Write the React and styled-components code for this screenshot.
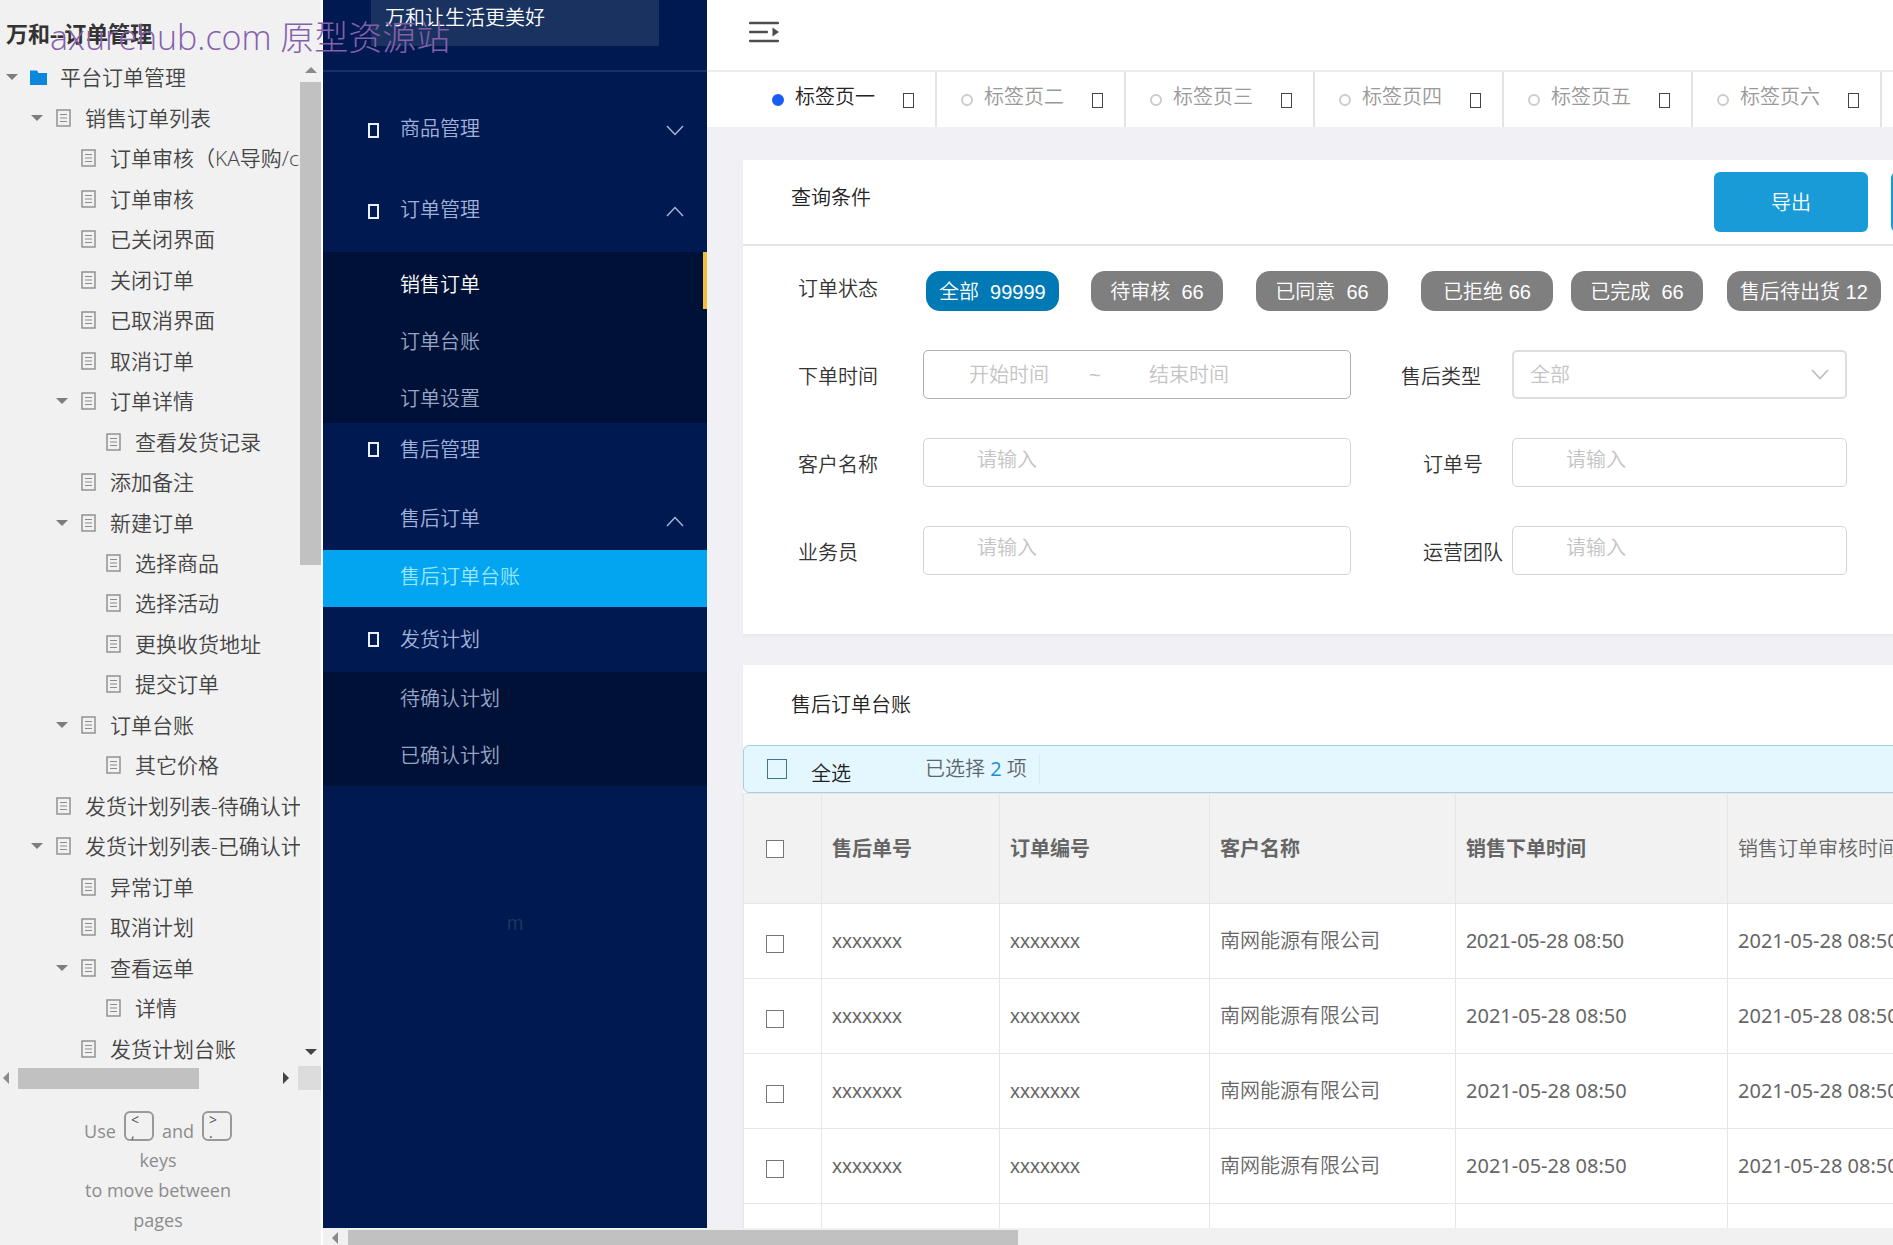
import React, { useState } from "react";
import styled, { createGlobalStyle } from "styled-components";

const pages = [
  { level: 0, text: "平台订单管理", open: true, folder: true },
  { level: 1, text: "销售订单列表", open: true },
  { level: 2, text: "订单审核（KA导购/cc）" },
  { level: 2, text: "订单审核" },
  { level: 2, text: "已关闭界面" },
  { level: 2, text: "关闭订单" },
  { level: 2, text: "已取消界面" },
  { level: 2, text: "取消订单" },
  { level: 2, text: "订单详情", open: true },
  { level: 3, text: "查看发货记录" },
  { level: 2, text: "添加备注" },
  { level: 2, text: "新建订单", open: true },
  { level: 3, text: "选择商品" },
  { level: 3, text: "选择活动" },
  { level: 3, text: "更换收货地址" },
  { level: 3, text: "提交订单" },
  { level: 2, text: "订单台账", open: true },
  { level: 3, text: "其它价格" },
  { level: 1, text: "发货计划列表-待确认计划" },
  { level: 1, text: "发货计划列表-已确认计划", open: true },
  { level: 2, text: "异常订单" },
  { level: 2, text: "取消计划" },
  { level: 2, text: "查看运单", open: true },
  { level: 3, text: "详情" },
  { level: 2, text: "发货计划台账" },
];

const tabs = ["标签页一", "标签页二", "标签页三", "标签页四", "标签页五", "标签页六", "标签页七"];

const statuses = [
  "全部  99999",
  "待审核  66",
  "已同意  66",
  "已拒绝 66",
  "已完成  66",
  "售后待出货 12",
];

const time = "2021-05-28 08:50";
const rows = [1, 2, 3, 4, 5];

function Chevron({ up, color, width }) {
  return (
    <svg width="18" height="11" viewBox="0 0 18 11" fill="none" stroke={color} strokeWidth={width}>
      <path d={up ? "M1 10 L9 1.5 L17 10" : "M1 1 L9 9.5 L17 1"} />
    </svg>
  );
}

function Arrow({ dir, color }) {
  const d = {
    up: "M0 9 L6 3 L12 9 Z",
    down: "M0 3 L12 3 L6 9 Z",
    left: "M9 0 L3 6 L9 12 Z",
    right: "M3 0 L9 6 L3 12 Z",
  };
  return (
    <svg width="12" height="12" viewBox="0 0 12 12" fill={color}>
      <path d={d[dir]} />
    </svg>
  );
}

function TreeIcon({ folder }) {
  if (folder) {
    return (
      <svg width="17" height="15" viewBox="0 0 17 15" fill="#0d87dc">
        <path d="M0 0.5 H7 L8.5 3 H17 V15 H0 Z" />
      </svg>
    );
  }
  return (
    <svg width="15" height="18" viewBox="0 0 15 18" fill="none" stroke="#8c8c8c" strokeWidth="1.4">
      <rect x="1" y="1" width="13" height="16" />
      <path d="M4 5.5 H11 M4 9 H11 M4 12.5 H11" strokeWidth="1.2" />
    </svg>
  );
}

function PageTree() {
  return (
    <TreePanel>
      <TreeTitle>万和--订单管理</TreeTitle>
      <TreeBody>
        <TreeList>
          {pages.map((page) => (
            <TreeRow key={page.text} href="#" $level={page.level}>
              <ToggleSlot>{page.open && <Arrow dir="down" color="#7d7d7d" />}</ToggleSlot>
              <IconSlot>
                <TreeIcon folder={page.folder} />
              </IconSlot>
              {page.text}
            </TreeRow>
          ))}
        </TreeList>
        <VScroll>
          <Arrow dir="up" color="#8a8a8a" />
          <VThumb />
          <Arrow dir="down" color="#444" />
        </VScroll>
      </TreeBody>
      <TreeHScroll>
        <HTrack>
          <Arrow dir="left" color="#8a8a8a" />
          <TreeHThumb />
          <Arrow dir="right" color="#444" />
        </HTrack>
        <Corner />
      </TreeHScroll>
      <KeyHint>
        <KeyLine>
          <span>Use</span>
          <Key>
            <span>&lt;</span>
            <span>,</span>
          </Key>
          <span>and</span>
          <Key>
            <span>&gt;</span>
            <span>.</span>
          </Key>
        </KeyLine>
        <p>keys</p>
        <p>to move between</p>
        <p>pages</p>
      </KeyHint>
    </TreePanel>
  );
}

function Sidebar() {
  return (
    <Side>
      <SideHead>
        <Slogan>万和让生活更美好</Slogan>
      </SideHead>
      <Menu>
        <MenuItem href="#" $height={81}>
          <Box $light />
          <MenuText $raised>商品管理</MenuText>
          <Chevron color="#a9b8dc" width="1.4" />
        </MenuItem>
        <MenuItem href="#" $height={81}>
          <Box $light />
          <MenuText $raised>订单管理</MenuText>
          <Chevron up color="#a9b8dc" width="1.4" />
        </MenuItem>
        <SubMenu $low>
          <SubItem href="#" $current>
            销售订单
          </SubItem>
          <SubItem href="#">订单台账</SubItem>
          <SubItem href="#">订单设置</SubItem>
        </SubMenu>
        <MenuItem href="#" $height={53}>
          <Box $light />
          <MenuText>售后管理</MenuText>
        </MenuItem>
        <MenuItem href="#" $height={74} $low>
          <Box $hidden />
          <MenuText $raised>售后订单</MenuText>
          <Chevron up color="#a9b8dc" width="1.4" />
        </MenuItem>
        <SubMenu>
          <SubItem href="#" $selected>
            售后订单台账
          </SubItem>
        </SubMenu>
        <MenuItem href="#" $height={65}>
          <Box $light />
          <MenuText>发货计划</MenuText>
        </MenuItem>
        <SubMenu>
          <SubItem href="#">待确认计划</SubItem>
          <SubItem href="#">已确认计划</SubItem>
        </SubMenu>
      </Menu>
      <SideNote>m</SideNote>
    </Side>
  );
}

function TabBar() {
  const [active, setActive] = useState(0);
  return (
    <Tabs>
      {tabs.map((tab, i) => (
        <Tab key={tab}>
          <TabButton type="button" $active={i === active} onClick={() => setActive(i)}>
            <Dot $active={i === active} />
            {tab}
          </TabButton>
          <CloseButton type="button" aria-label={"关闭" + tab}>
            <Box />
          </CloseButton>
        </Tab>
      ))}
    </Tabs>
  );
}

function Filters() {
  const [status, setStatus] = useState(0);
  return (
    <Card>
      <FilterHead>
        <CardTitle>查询条件</CardTitle>
        <Actions>
          <PrimaryButton type="button">导出</PrimaryButton>
          <PrimaryButton type="button">查询</PrimaryButton>
        </Actions>
      </FilterHead>
      <FilterForm>
        <StatusLabel>订单状态</StatusLabel>
        <Pills>
          {statuses.map((s, i) => (
            <Pill key={s} type="button" $active={i === status} onClick={() => setStatus(i)}>
              {s}
            </Pill>
          ))}
        </Pills>

        <Label htmlFor="start">下单时间</Label>
        <DateRange>
          <DateInput id="start" placeholder="开始时间" />
          <span>~</span>
          <DateInput aria-label="结束时间" placeholder="结束时间" />
        </DateRange>
        <Label htmlFor="type" $indent={50}>
          售后类型
        </Label>
        <SelectBox>
          <Select id="type">
            <option>全部</option>
          </Select>
          <Chevron color="#bfbfbf" width="1.8" />
        </SelectBox>

        <Label htmlFor="customer">客户名称</Label>
        <TextInput id="customer" placeholder="请输入" />
        <Label htmlFor="order" $indent={72}>
          订单号
        </Label>
        <TextInput id="order" placeholder="请输入" />

        <Label htmlFor="sales">业务员</Label>
        <TextInput id="sales" placeholder="请输入" />
        <Label htmlFor="team" $indent={72}>
          运营团队
        </Label>
        <TextInput id="team" placeholder="请输入" />
      </FilterForm>
    </Card>
  );
}

function Ledger() {
  return (
    <Card>
      <LedgerHead>
        <CardTitle>售后订单台账</CardTitle>
      </LedgerHead>
      <SelectBar>
        <SelectAll>
          <Check type="checkbox" $blue />
          <span>全选</span>
        </SelectAll>
        <Selected>
          已选择 <em>2</em> 项
        </Selected>
      </SelectBar>
      <Table>
        <colgroup>
          <Col $width={78} />
          <Col $width={178} />
          <Col $width={210} />
          <Col $width={246} />
          <Col $width={272} />
          <Col />
        </colgroup>
        <thead>
          <tr>
            <CheckHead>
              <Check type="checkbox" aria-label="全选" />
            </CheckHead>
            <Th>售后单号</Th>
            <Th>订单编号</Th>
            <Th>客户名称</Th>
            <Th>销售下单时间</Th>
            <Th $plain>销售订单审核时间</Th>
          </tr>
        </thead>
        <tbody>
          {rows.map((row) => (
            <tr key={row}>
              <CheckCell>
                <Check type="checkbox" aria-label={"选择第" + row + "行"} />
              </CheckCell>
              <Td>xxxxxxx</Td>
              <Td>xxxxxxx</Td>
              <Td>南网能源有限公司</Td>
              <Td $wide={row > 1}>{time}</Td>
              <Td $wide>{time}</Td>
            </tr>
          ))}
        </tbody>
      </Table>
    </Card>
  );
}

export default function App() {
  return (
    <Page>
      <GlobalStyle />
      <PageTree />
      <Frame>
        <Canvas>
          <Sidebar />
          <Main>
            <TopBar>
              <IconButton type="button" aria-label="收起菜单">
                <svg width="32" height="22" viewBox="0 0 32 22" fill="#4d4d4d">
                  <rect x="1" y="0.7" width="30" height="2.6" rx="1" />
                  <rect x="1" y="9.7" width="19" height="2.6" rx="1" />
                  <rect x="1" y="18.7" width="30" height="2.6" rx="1" />
                  <path d="M24.5 6.5 L31 11 L24.5 15.5 Z" />
                </svg>
              </IconButton>
            </TopBar>
            <TabBar />
            <Content>
              <Filters />
              <Ledger />
            </Content>
          </Main>
        </Canvas>
        <FrameHScroll>
          <Arrow dir="left" color="#8a8a8a" />
          <FrameHThumb />
        </FrameHScroll>
      </Frame>
      <Watermark>axurehub.com 原型资源站</Watermark>
    </Page>
  );
}

const GlobalStyle = createGlobalStyle`
  * {
    box-sizing: border-box;
  }

  body {
    margin: 0;
    font-family: "Liberation Sans", "Noto Sans CJK SC", sans-serif;
    font-size: 20px;
    font-weight: 350;
    line-height: 30px;
    color: #333;
  }

  p, h1, h2 {
    margin: 0;
  }

  a {
    text-decoration: none;
  }

  button, input, select {
    font: inherit;
    color: inherit;
    padding: 0;
    border: none;
    background: none;
    border-radius: 0;
  }
`;

const Page = styled.div`
  position: relative;
  display: flex;
  height: 100vh;
  overflow: hidden;
  background-color: #fff;
`;

/* over everything, like a stamp */
const Watermark = styled.div`
  position: absolute;
  top: 17px;
  left: 50px;
  font-family: "Open Sans", "Noto Sans CJK SC", sans-serif;
  font-size: 34px;
  font-weight: 300;
  line-height: 40px;
  white-space: nowrap;
  color: #8560ac;
  pointer-events: none;
`;

const TreePanel = styled.aside`
  flex: none;
  width: 321px;
  display: flex;
  flex-direction: column;
  background-color: #f1f1f1;
  color: #444;
  font-family: "Open Sans", "Noto Sans CJK SC", sans-serif;
`;

const TreeTitle = styled.h1`
  height: 57px;
  padding: 18px 6px 0;
  font-size: 22px;
  font-weight: 700;
  line-height: 30px;
  color: #333;
`;

const TreeBody = styled.div`
  display: flex;
  height: 1009px;
`;

const TreeList = styled.nav`
  flex: 1;
  min-width: 0;
  height: 1012px;
  display: grid;
  grid-auto-rows: 1fr;
  overflow: hidden;
`;

const TreeRow = styled.a`
  display: flex;
  align-items: center;
  padding-left: ${(props) => 6 + props.$level * 25}px;
  font-size: 21px;
  white-space: nowrap;
  color: #444;
`;

const ToggleSlot = styled.span`
  flex: none;
  display: flex;
  width: 23px;
`;

const IconSlot = styled.span`
  flex: none;
  display: flex;
  justify-content: center;
  width: 19px;
  margin-right: 12px;
`;

const VScroll = styled.div`
  width: 21px;
  display: flex;
  flex-direction: column;
  align-items: center;
  padding: 7px 0 8px;
`;

const VThumb = styled.div`
  width: 100%;
  height: 483px;
  margin: 6px 0 auto;
  background-color: #c1c1c1;
`;

const TreeHScroll = styled.div`
  display: flex;
  height: 24px;
`;

const HTrack = styled.div`
  flex: 1;
  display: flex;
  align-items: center;
  padding-right: 6px;
`;

const TreeHThumb = styled.div`
  width: 181px;
  height: 21px;
  margin: 0 auto 0 6px;
  background-color: #c1c1c1;
`;

const Corner = styled.div`
  width: 23px;
  background-color: #dcdcdc;
`;

const KeyHint = styled.div`
  padding: 21px 5px 0 0;
  font-size: 18px;
  text-align: center;
  font-weight: 400;
  color: #8c8c8c;
`;

const KeyLine = styled.div`
  display: flex;
  justify-content: center;
  align-items: flex-end;
  gap: 8px;
  line-height: 20px;
  margin-bottom: 4px;
`;

const Key = styled.kbd`
  display: flex;
  flex-direction: column;
  width: 30px;
  height: 30px;
  padding: 0 5px;
  border: 2px solid #999;
  border-radius: 6px;
  font-family: "Open Sans", sans-serif;
  font-size: 14px;
  line-height: 13px;
  text-align: left;
  color: #555;
`;

const Frame = styled.div`
  flex: 1;
  min-width: 0;
  display: flex;
  flex-direction: column;
  margin-left: 2px;
`;

const Canvas = styled.div`
  flex: 1;
  min-height: 0;
  display: flex;
  overflow: hidden;
`;

const FrameHScroll = styled.div`
  flex: none;
  display: flex;
  align-items: center;
  height: 17px;
  padding: 2px 6px 0;
  background-color: #f1f1f1;
`;

const FrameHThumb = styled.div`
  width: 43%;
  height: 15px;
  margin-left: 7px;
  background-color: #c1c1c1;
`;

const Side = styled.aside`
  flex: none;
  width: 384px;
  background-color: #001950;
`;

const SideHead = styled.div`
  height: 72px;
  padding: 0 48px;
  border-bottom: 2px solid #17306a;
`;

const Slogan = styled.div`
  height: 46px;
  padding: 3px 14px;
  background-color: #19325f;
  color: #fff;
`;

const Menu = styled.nav`
  padding-top: 18px;
`;

const MenuItem = styled.a`
  display: flex;
  align-items: center;
  height: ${(props) => props.$height}px;
  padding: ${(props) => (props.$low ? "16px" : "0")} 23px 0 45px;
  color: #a2b1d8;
`;

const MenuText = styled.span`
  flex: 1;
  margin-left: 21px;
  padding-bottom: ${(props) => (props.$raised ? "4px" : "0")};
`;

/* empty glyph frame of the missing icon font */
const Box = styled.span`
  display: block;
  flex: none;
  width: 11px;
  height: 15px;
  border: ${(props) => (props.$light ? "2px solid #e8efff" : "1px solid #444")};
  visibility: ${(props) => (props.$hidden ? "hidden" : "visible")};
`;

const SubItem = styled.a`
  display: flex;
  align-items: center;
  height: 57px;
  padding-left: 77px;
  background-color: ${(props) => (props.$selected ? "#03a5f0" : "#001138")};
  border-right: ${(props) => (props.$current ? "4px solid #f5bd3c" : "none")};
  color: ${(props) => (props.$current ? "#fff" : props.$selected ? "#9be6ff" : "#98a5c6")};
`;

const SubMenu = styled.div`
  ${SubItem} {
    padding-top: ${(props) => (props.$low ? "8px" : "0")};
    padding-bottom: ${(props) => (props.$low ? "0" : "4px")};
  }
`;

const SideNote = styled.p`
  margin-top: 122px;
  text-align: center;
  color: #1c3463;
`;

const Main = styled.main`
  flex: 1;
  min-width: 0;
  background-color: #f0f0f5;
`;

const TopBar = styled.header`
  height: 70px;
  padding: 21px 41px;
  background-color: #fff;
`;

const IconButton = styled.button`
  display: flex;
`;

const Tabs = styled.div`
  display: flex;
  height: 57px;
  padding-left: 41px;
  border-top: 2px solid #ececec;
  background-color: #fff;
`;

const Tab = styled.div`
  flex: none;
  display: flex;
  align-items: center;
  width: 189px;
  padding-left: 24px;
  border-right: 2px solid #e4e4e4;
`;

const TabButton = styled.button`
  display: flex;
  align-items: center;
  padding-bottom: 6px;
  color: ${(props) => (props.$active ? "#222" : "#999")};
`;

const Dot = styled.span`
  width: 12px;
  height: 12px;
  margin: 6px 11px 0 0;
  border: 2px solid ${(props) => (props.$active ? "#165df0" : "#ccc")};
  border-radius: 50%;
  background-color: ${(props) => (props.$active ? "#165df0" : "#fff")};
`;

const CloseButton = styled.button`
  margin-left: 28px;
  padding-top: 2px;
`;

const Content = styled.div`
  width: calc(100% + 174px);
  padding: 33px 0 0 36px;
`;

const Card = styled.section`
  margin-bottom: 31px;
  background-color: #fff;
  box-shadow: 0 2px 3px rgba(0, 0, 0, 0.04);
`;

const CardTitle = styled.h2`
  font-size: 20px;
  font-weight: 350;
  color: #222;
`;

const FilterHead = styled.div`
  display: flex;
  align-items: center;
  justify-content: space-between;
  height: 86px;
  padding: 0 22px 8px 48px;
  border-bottom: 2px solid #e4e4e4;
`;

const Actions = styled.div`
  display: flex;
  gap: 23px;
  padding-top: 8px;
`;

const PrimaryButton = styled.button`
  width: 154px;
  height: 60px;
  padding-top: 2px;
  border-radius: 6px;
  background-color: #189bd7;
  color: #fff;
`;

const FilterForm = styled.form`
  display: grid;
  grid-template-columns: 125px 428px 161px 335px;
  row-gap: 39px;
  padding: 25px 0 59px 55px;
`;

const Label = styled.label`
  align-self: center;
  padding-top: 4px;
  padding-left: ${(props) => props.$indent || 0}px;
`;

const StatusLabel = styled.span`
  align-self: center;
  padding-bottom: 4px;
`;

const Pills = styled.div`
  grid-column: 2 / -1;
  display: grid;
  grid-template-columns: 165px 165px 165px 150px 156px 154px;
  padding-left: 3px;
`;

const Pill = styled.button`
  justify-self: start;
  min-width: 132px;
  height: 40px;
  padding: 2px 13px 0;
  border-radius: 14px;
  background-color: ${(props) => (props.$active ? "#0079b4" : "#7f7f7f")};
  color: #fff;
  white-space: pre;
`;

const TextInput = styled.input`
  width: 100%;
  height: 49px;
  padding: 0 53px 4px;
  border: 1px solid #d4d4d4;
  border-radius: 5px;

  &::placeholder {
    color: #c4c4c4;
    opacity: 1;
  }
`;

const DateRange = styled.div`
  display: flex;
  align-items: center;
  height: 49px;
  padding-left: 45px;
  border: 1px solid #b0b0b0;
  border-radius: 5px;
  color: #c4c4c4;
`;

const DateInput = styled.input`
  width: 120px;

  & + span {
    width: 60px;
  }

  &::placeholder {
    color: #c4c4c4;
    opacity: 1;
  }
`;

const SelectBox = styled.div`
  display: flex;
  align-items: center;
  height: 49px;
  padding: 0 16px;
  border: 2px solid #dedede;
  border-radius: 5px;
`;

const Select = styled.select`
  flex: 1;
  appearance: none;
  color: #c4c4c4;
`;

const LedgerHead = styled.div`
  height: 80px;
  padding: 25px 48px;
`;

const SelectBar = styled.div`
  display: flex;
  height: 48px;
  border: 1px solid #a5cfe0;
  border-radius: 6px;
  background-color: #e5f7fe;
`;

const Check = styled.input`
  appearance: none;
  display: block;
  flex: none;
  width: ${(props) => (props.$blue ? 20 : 18)}px;
  height: ${(props) => (props.$blue ? 20 : 18)}px;
  margin: 0;
  border: ${(props) => (props.$blue ? "1px solid #3c7590" : "1px solid #767676")};
  background-color: ${(props) => (props.$blue ? "transparent" : "#fff")};
`;

const SelectAll = styled.label`
  display: flex;
  width: 181px;
  padding: 13px 0 0 23px;

  span {
    margin-left: 24px;
    color: #222;
  }
`;

const Selected = styled.p`
  align-self: center;
  padding-right: 12px;
  border-right: 1px solid #d8eaf2;
  font-family: "Open Sans", "Noto Sans CJK SC", sans-serif;
  color: #5c666e;

  em {
    font-style: normal;
    font-weight: 400;
    color: #1c8cd0;
  }
`;

const Table = styled.table`
  width: 100%;
  table-layout: fixed;
  border-collapse: collapse;
  text-align: left;
  color: #666;
`;

const Col = styled.col`
  width: ${(props) => (props.$width ? props.$width + "px" : "auto")};
`;

const Th = styled.th`
  height: 110px;
  padding: 0 10px;
  border: 1px solid #e6e6ea;
  background-color: #f2f2f2;
  font-weight: ${(props) => (props.$plain ? 350 : 700)};
  white-space: nowrap;
`;

const Td = styled.td`
  height: 75px;
  padding: 0 10px;
  border: 1px solid #e6e6ea;
  font-family: ${(props) => (props.$wide ? '"Noto Sans"' : '"Liberation Sans"')}, "Noto Sans CJK SC", sans-serif;
  font-weight: ${(props) => (props.$wide ? 400 : 350)};
`;

const CheckHead = styled(Th)`
  padding: 0 22px;
`;

const CheckCell = styled(Td)`
  padding: 6px 22px 0;
`;
